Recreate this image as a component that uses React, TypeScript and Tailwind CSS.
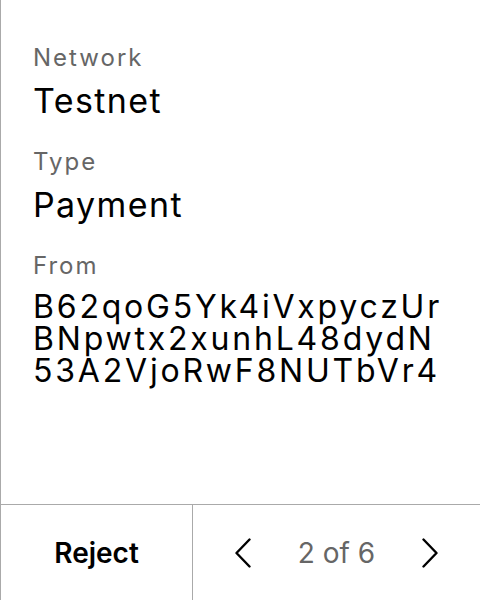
const Field = ({ label, children }: { label: string; children: React.ReactNode }) => (
  <div className="flex flex-col">
    <span className="text-[24px] leading-[32px] tracking-[2px] text-[#666666]">{label}</span>
    {children}
  </div>
);

const Chevron = ({ dir }: { dir: "left" | "right" }) => (
  <svg width="16" height="30" viewBox="0 0 16 30" fill="none" stroke="black" strokeWidth="2.4" strokeLinecap="round" strokeLinejoin="round">
    {dir === "left" ? <path d="M14.5 1.5 1.5 15l13 13.5" /> : <path d="M1.5 1.5 14.5 15 1.5 28.5" />}
  </svg>
);

export default function App() {
  return (
    <div
      className="flex h-[600px] w-[480px] flex-col border-l border-[#aaaaaa] bg-white"
      style={{ fontFamily: "Inter, 'Noto Sans', sans-serif" }}
    >
      <div className="flex h-[504px] flex-col gap-[27px] pl-[32px] pt-[42px]">
        <Field label="Network">
          <span className="mt-[9px] text-[34px] leading-[36px] tracking-[1.4px] text-black">Testnet</span>
        </Field>
        <Field label="Type">
          <span className="mt-[9px] text-[34px] leading-[36px] tracking-[1.4px] text-black">Payment</span>
        </Field>
        <Field label="From">
          <span className="mt-[9px] w-[418px] break-all text-[32px] leading-[32px] tracking-[2.8px] text-black">
            B62qoG5Yk4iVxpyczUrBNpwtx2xunhL48dydN53A2VjoRwF8NUTbVr4
          </span>
        </Field>
      </div>
      <div className="flex h-[96px] border-t border-[#aaaaaa]">
        <button className="flex w-[192px] items-center justify-center border-r border-[#aaaaaa] text-[28px] font-semibold text-black">
          Reject
        </button>
        <div className="flex flex-1 items-center justify-center gap-[47px]">
          <Chevron dir="left" />
          <span className="text-[28px] text-[#666666]">2 of 6</span>
          <Chevron dir="right" />
        </div>
      </div>
    </div>
  );
}
